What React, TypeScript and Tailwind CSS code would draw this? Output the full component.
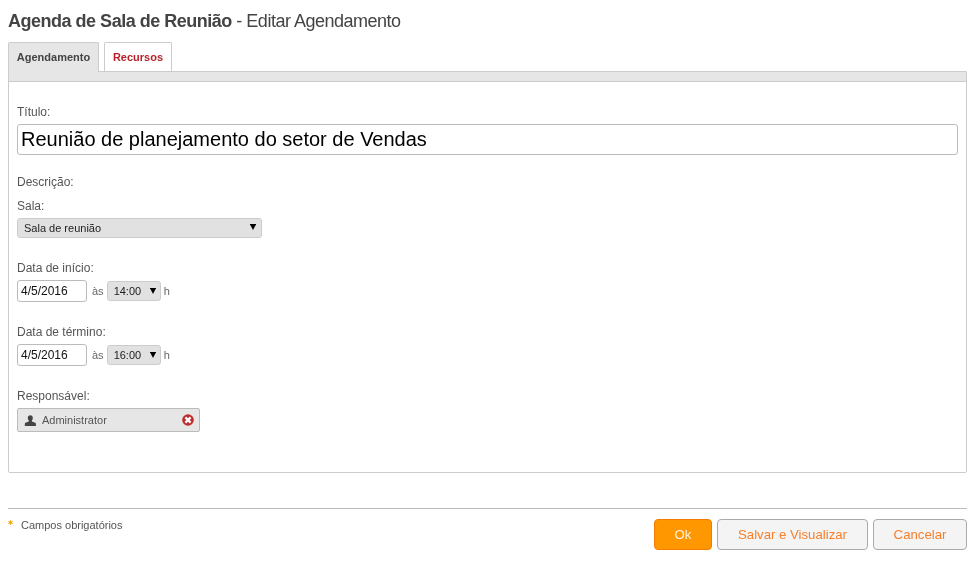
import React from "react";

const Label = ({ children, className = "" }: { children: React.ReactNode; className?: string }) => (
  <div className={`text-[12px] leading-[14px] text-[#555] ${className}`}>{children}</div>
);

const Caret = ({ className = "" }: { className?: string }) => (
  <svg width="6" height="6" viewBox="0 0 6 6" className={`shrink-0 ${className}`}>
    <path d="M-0.2 0H6.2L3 6Z" fill="#000" />
  </svg>
);

const DateRow = ({ date, time }: { date: string; time: string }) => (
  <div className="flex items-center mt-[5px] h-[22px]">
    <div className="w-[70px] h-[22px] border border-[#bbb] rounded-[3px] bg-white pl-[3px] text-[12px] leading-[20px] text-[#111]">
      {date}
    </div>
    <span className="ml-[5px] text-[11px] text-[#666]">às</span>
    <div className="ml-[3px] w-[54px] h-[20px] rounded-[3px] border border-[#ccc] bg-[#e1e1e1] flex items-center justify-between pl-[6px] pr-[4px] text-[11px] text-[#222]">
      <span>{time}</span>
      <Caret className="-mt-px" />
    </div>
    <span className="ml-[3px] text-[11px] text-[#666]">h</span>
  </div>
);

const App = () => {
  return (
    <div className="w-[975px] h-[585px] px-2 overflow-hidden will-change-transform font-['Liberation_Sans',Arial,sans-serif]">
      <h1 className="pt-[10px] h-[42px] text-[18px] leading-[22px] tracking-[-0.49px] text-[#444]">
        <span className="font-bold">Agenda de Sala de Reunião</span>
        <span> - Editar Agendamento</span>
      </h1>

      <div className="flex relative z-10 h-[30px]">
        <div className="w-[91px] h-[30px] border border-[#ccc] border-b-0 rounded-t-[2px] bg-[#e6e6e6] flex items-center justify-center text-[11px] font-bold text-[#444]">
          Agendamento
        </div>
        <div className="ml-[5px] w-[68px] h-[29px] border border-[#ccc] border-b-0 rounded-t-[2px] bg-white flex items-center justify-center text-[11px] font-bold text-[#b5232a]">
          Recursos
        </div>
      </div>

      <div className="-mt-px h-[402px] border border-[#ccc] rounded-b-[2px]">
        <div className="h-[10px] bg-[#e6e6e6] border-b border-[#ccc]" />
        <div className="px-2 pt-[23px]">
          <Label>Título:</Label>
          <div className="mt-[5px] w-[941px] h-[31px] border border-[#bbb] rounded-[3px] pl-[3px] text-[20px] leading-[29px] text-black">
            Reunião de planejamento do setor de Vendas
          </div>

          <Label className="mt-[20px]">Descrição:</Label>

          <Label className="mt-[10px]">Sala:</Label>
          <div className="mt-[5px] w-[245px] h-[20px] rounded-[3px] border border-[#ccc] bg-[#e1e1e1] flex items-center justify-between pl-[6px] pr-[5px] text-[11px] text-[#222]">
            <span>Sala de reunião</span>
            <Caret className="-mt-[2px]" />
          </div>

          <Label className="mt-[23px]">Data de início:</Label>
          <DateRow date="4/5/2016" time="14:00" />

          <Label className="mt-[23px]">Data de término:</Label>
          <DateRow date="4/5/2016" time="16:00" />

          <Label className="mt-[23px]">Responsável:</Label>
          <div className="mt-[5px] w-[183px] h-[24px] rounded-[2px] border border-[#bbb] bg-[#e6e6e6] flex items-center pl-[6px] pr-[5px] text-[11px] text-[#555]">
            <svg width="13" height="13" viewBox="0 0 13 13" className="shrink-0">
              <path d="M6.3 1.2c1.5 0 2.5 1 2.5 2.7 0 1-.4 1.9-.9 2.4v1c0 .7 4 1 4 2.6V12H.8v-2.1c0-1.6 4-1.9 4-2.6v-1C4.200 5.800 3.800 4.900 3.800 3.900c0-1.700 1-2.700 2.500-2.700Z" fill="#444" />
            </svg>
            <span className="ml-[5px] flex-1">Administrator</span>
            <svg width="12" height="12" viewBox="0 0 12 12" className="shrink-0 -mt-px">
              <circle cx="6" cy="6" r="5.8" fill="#bd2c2c" />
              <path d="M3.4 3.4L8.6 8.6M8.6 3.4L3.4 8.6" stroke="#fff" strokeWidth="2.2" />
            </svg>
          </div>
        </div>
      </div>

      <div className="mt-[35px] border-t border-[#bbb] flex justify-between">
        <div className="flex items-center h-[16px] mt-[8px] text-[11px] text-[#555]">
          <svg width="5" height="5" viewBox="0 0 5 5" className="shrink-0 -mt-[6px]">
            <path d="M2.5 0V5M0 1.2L5 3.8M5 1.2L0 3.8" stroke="#f9c766" strokeWidth="1" />
            <circle cx="2.5" cy="2.5" r="1.5" fill="#f5a300" />
          </svg>
          <span className="ml-[8px]">Campos obrigatórios</span>
        </div>
        <div className="flex gap-[5px] mt-[10px]">
          <button className="w-[58px] h-[31px] rounded-[4px] border border-[#f57c00] bg-[#ff9800] text-[13.2px] text-[#fff3e0]">
            Ok
          </button>
          <button className="w-[151px] h-[31px] rounded-[4px] border border-[#aaa] bg-[#f4f4f4] text-[13.2px] text-[#f77f2a]">
            Salvar e Visualizar
          </button>
          <button className="w-[94px] h-[31px] rounded-[4px] border border-[#aaa] bg-[#f4f4f4] text-[13.2px] text-[#f77f2a]">
            Cancelar
          </button>
        </div>
      </div>
    </div>
  );
};

export default App;
